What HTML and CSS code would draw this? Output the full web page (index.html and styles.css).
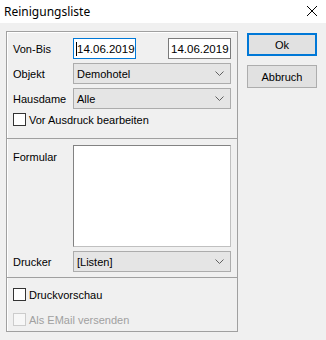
FILE: index.html
```html
<!DOCTYPE html>
<html>
<head>
<meta charset="utf-8">
<link rel="stylesheet" href="styles.css">
</head>
<body>
<div class="window">
  <div class="titlebar">
    <span class="title">Reinigungsliste</span>
    <svg class="close" width="12" height="12" viewBox="0 0 12 12"><path d="M1 1 L11 11 M11 1 L1 11" stroke="#000" stroke-width="1" fill="none"/></svg>
  </div>
  <div class="client">
    <div class="group">
      <div class="sec sec1">
        <div class="row">
          <span class="label">Von-Bis</span>
          <div class="edit focus"><span class="caret"></span>14.06.2019</div>
          <div class="spacer"></div>
          <div class="edit">14.06.2019</div>
        </div>
        <div class="row">
          <span class="label">Objekt</span>
          <div class="combo"><span>Demohotel</span><svg class="arrow" width="9" height="5" viewBox="0 0 9 5"><path d="M0.5 0.5 L4.5 4.5 L8.5 0.5" stroke="#606060" fill="none"/></svg></div>
        </div>
        <div class="row">
          <span class="label">Hausdame</span>
          <div class="combo"><span>Alle</span><svg class="arrow" width="9" height="5" viewBox="0 0 9 5"><path d="M0.5 0.5 L4.5 4.5 L8.5 0.5" stroke="#606060" fill="none"/></svg></div>
        </div>
        <label class="check"><span class="box"></span>Vor Ausdruck bearbeiten</label>
      </div>
      <div class="sec sec2">
        <div class="row top">
          <span class="label flabel">Formular</span>
          <div class="list"></div>
        </div>
        <div class="row">
          <span class="label">Drucker</span>
          <div class="combo"><span>[Listen]</span><svg class="arrow" width="9" height="5" viewBox="0 0 9 5"><path d="M0.5 0.5 L4.5 4.5 L8.5 0.5" stroke="#606060" fill="none"/></svg></div>
        </div>
      </div>
      <div class="sec sec3">
        <label class="check"><span class="box"></span>Druckvorschau</label>
        <label class="check disabled"><span class="box"></span>Als EMail versenden</label>
      </div>
    </div>
    <div class="buttons">
      <div class="btn default">Ok</div>
      <div class="btn">Abbruch</div>
    </div>
  </div>
</div>
</body>
</html>
```
FILE: styles.css
```css
html, body {
  margin: 0;
  padding: 0;
}
body {
  width: 326px;
  height: 340px;
  background: #f0f0f0;
  font-family: "Liberation Sans", Arial, sans-serif;
  font-size: 11px;
  color: #000;
  overflow: hidden;
}
.window {
  width: 326px;
  height: 340px;
  display: flex;
  flex-direction: column;
}
.titlebar {
  height: 23px;
  background: #fff;
  display: flex;
  align-items: center;
  justify-content: space-between;
  padding: 0 8px 0 4px;
  box-sizing: border-box;
}
.title {
  font-family: "Noto Sans", "Open Sans", sans-serif;
  font-size: 12px;
  margin-top: -1px;
}
.close {
  margin-right: 0px;
  margin-top: -1px;
}
.client {
  display: flex;
  padding: 8px 0 0 6px;
}
.group {
  width: 232px;
  height: 301px;
  box-sizing: border-box;
  border: 1px solid #a0a0a0;
  box-shadow: inset 1px 1px 0 #fff;
  display: flex;
  flex-direction: column;
}
.sec {
  display: flex;
  flex-direction: column;
  gap: 4px;
  padding: 6px 5px 0 6px;
  box-sizing: border-box;
}
.sec1 { height: 106px; }
.sec2 {
  height: 139px;
  border-top: 1px solid #a0a0a0;
}
.sec3 {
  flex: 1;
  border-top: 1px solid #a0a0a0;
  padding-top: 10px;
  gap: 12px;
}
.row {
  display: flex;
  align-items: center;
  height: 21px;
}
.row.top {
  align-items: flex-start;
  height: auto;
}
.label {
  width: 60px;
  flex: none;
}
.flabel {
  padding-top: 6px;
}
.edit {
  width: 63px;
  height: 21px;
  box-sizing: border-box;
  border: 1px solid #7a7a7a;
  background: #fff;
  display: flex;
  align-items: center;
  padding-left: 2px;
  font-size: 11.5px;
}
.edit.focus {
  border-color: #0078d7;
}
.caret {
  width: 1px;
  height: 14px;
  background: #000;
  margin-right: 0px;
}
.spacer { width: 32px; }
.combo {
  width: 158px;
  height: 21px;
  box-sizing: border-box;
  border: 1px solid #acacac;
  background: #e5e5e5;
  display: flex;
  align-items: center;
  justify-content: space-between;
  padding: 0 6px 0 3px;
}
.list {
  width: 158px;
  height: 102px;
  box-sizing: border-box;
  background: #fff;
  border: 1px solid #828282;
  border-right-color: #c0c0c0;
  border-bottom-color: #c0c0c0;
}
.check {
  display: flex;
  align-items: center;
  height: 13px;
  margin-top: 0;
}
.sec1 .check { margin-top: 0; }
.box {
  width: 13px;
  height: 13px;
  box-sizing: border-box;
  border: 1px solid #333;
  background: #fff;
  margin-right: 3px;
}
.disabled { color: #a0a0a0; }
.disabled .box {
  border-color: #cccccc;
  background: #f7f7f7;
}
.buttons {
  display: flex;
  flex-direction: column;
  gap: 9px;
  margin-left: 9px;
  padding-top: 2px;
}
.btn {
  width: 70px;
  height: 23px;
  box-sizing: border-box;
  border: 1px solid #adadad;
  background: #e1e1e1;
  display: flex;
  align-items: center;
  justify-content: center;
}
.btn.default {
  border: 2px solid #0078d7;
}
```
